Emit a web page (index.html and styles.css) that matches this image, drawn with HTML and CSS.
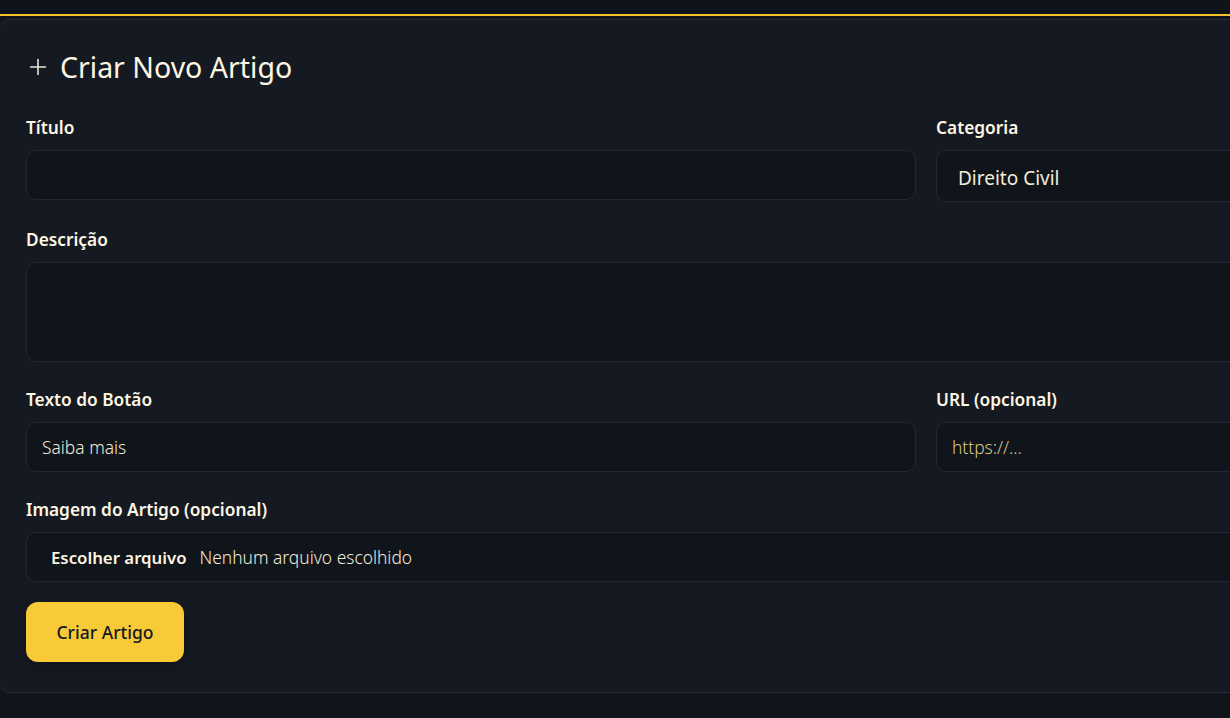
FILE: index.html
```html
<!DOCTYPE html>
<html lang="pt">
<head>
<meta charset="utf-8">
<title>Criar Novo Artigo</title>
<link rel="stylesheet" href="styles.css">
</head>
<body>
<div class="topbar"></div>
<main class="page">
  <section class="card">
    <h2 class="card-title">
      <svg class="plus" width="18" height="18" viewBox="0 0 18 18" aria-hidden="true"><path d="M9 1.5v15M1.5 9h15" stroke="currentColor" stroke-width="1.6" fill="none" stroke-linecap="round"/></svg>
      <span>Criar Novo Artigo</span>
    </h2>
    <form class="form">
      <div class="row">
        <div class="field">
          <label class="label">Título</label>
          <input class="input" type="text">
        </div>
        <div class="field">
          <label class="label">Categoria</label>
          <div class="input select">Direito Civil</div>
        </div>
      </div>
      <div class="field">
        <label class="label">Descrição</label>
        <textarea class="input textarea"></textarea>
      </div>
      <div class="row">
        <div class="field">
          <label class="label">Texto do Botão</label>
          <input class="input" type="text" value="Saiba mais">
        </div>
        <div class="field">
          <label class="label">URL (opcional)</label>
          <input class="input" type="text" placeholder="https://...">
        </div>
      </div>
      <div class="field">
        <label class="label">Imagem do Artigo (opcional)</label>
        <div class="input file"><span class="file-btn">Escolher arquivo</span><span class="file-name">Nenhum arquivo escolhido</span></div>
      </div>
      <div class="actions">
        <button type="button" class="btn">Criar Artigo</button>
      </div>
    </form>
  </section>
</main>
</body>
</html>
```
FILE: styles.css
```css
html, body {
  margin: 0;
  padding: 0;
  overflow: hidden;
  background: #10141b;
}
body {
  font-family: "Noto Sans", "Open Sans", sans-serif;
  color: #fdf6e1;
  width: 1230px;
  height: 718px;
}
.topbar {
  height: 14px;
  background: #0f131a;
  border-bottom: 2px solid #f6c22c;
}
.page {
  padding-top: 3px;
  margin-left: -2px;
}
.card {
  width: 1830px;
  box-sizing: border-box;
  background: #151922;
  border: 1px solid #262b36;
  border-radius: 12px;
  padding: 28px 0 30px 27px;
}
.card-title {
  display: flex;
  align-items: center;
  gap: 13px;
  margin: 0 0 30px 0;
  padding-left: 3px;
  font-size: 28.5px;
  font-weight: 400;
  line-height: 38px;
  color: #fdf6e1;
}
.plus { display: block; color: #e9e4d6; }
.form {
  display: flex;
  flex-direction: column;
  gap: 26px;
  width: 1780px;
}
.row {
  display: grid;
  grid-template-columns: 890px 1fr;
  gap: 20px;
}
.field {
  display: flex;
  flex-direction: column;
  gap: 10px;
}
.label {
  font-size: 17.3px;
  font-weight: 600;
  line-height: 24px;
  color: #fdf6e1;
}
.input {
  box-sizing: border-box;
  height: 50px;
  background: #10141b;
  border: 1px solid #232835;
  border-radius: 10px;
  padding: 0 15px;
  font-family: inherit;
  font-size: 17.4px;
  font-weight: 300;
  color: #f3ecd8;
  outline: none;
}
.input::placeholder { color: #dcc78c; }
.select {
  height: 52px;
  display: flex;
  align-items: center;
  padding: 3px 0 0 21px;
  font-size: 19px;
  font-weight: 400;
}
.textarea {
  height: 100px;
  resize: none;
}
.file {
  display: flex;
  align-items: center;
  gap: 13px;
  padding-left: 24px;
}
.file-btn { font-weight: 600; font-size: 16.8px; color: #fdf6e1; }
.file-name { font-weight: 300; }
.actions { display: flex; margin-top: -6px; }
.btn {
  width: 158px;
  height: 60px;
  background: #f8ca38;
  border: none;
  border-radius: 12px;
  font-family: inherit;
  font-size: 17.5px;
  font-weight: 500;
  color: #141821;
  box-shadow: 0 4px 14px rgba(0,0,0,0.25);
}
```
